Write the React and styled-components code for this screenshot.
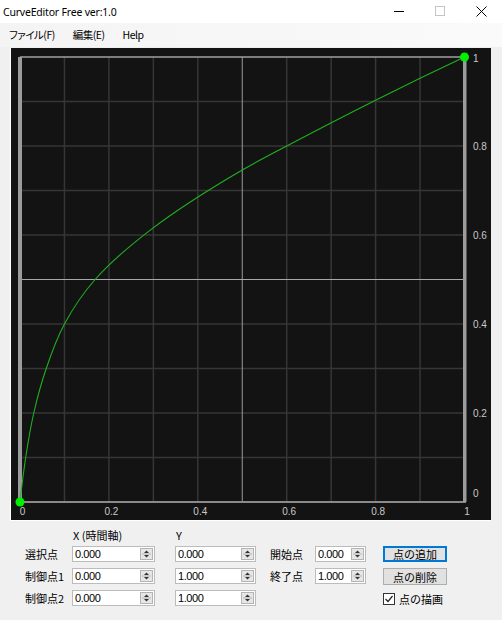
import React from "react";
import styled, { createGlobalStyle } from "styled-components";

const Global = createGlobalStyle`
  html, body { margin: 0; padding: 0; background: #f0f0f0; }
  body { width: 502px; height: 620px; overflow: hidden; }
  * { box-sizing: border-box; }
`;

const Window = styled.div`
  width: 502px;
  height: 620px;
  display: flex;
  flex-direction: column;
  background: #f0f0f0;
  font-family: "Noto Sans CJK JP", "Noto Sans", sans-serif;
  color: #000;
`;

const TitleBar = styled.div`
  height: 23px;
  background: #fff;
  display: flex;
  align-items: center;
  justify-content: space-between;
`;

const Title = styled.span`
  font-family: "Noto Sans", "Noto Sans CJK JP", sans-serif;
  font-size: 10.5px;
  letter-spacing: -0.2px;
  padding-left: 3px;
  color: #000;
`;

const Controls = styled.div`
  display: flex;
  height: 23px;
`;

const CtrlBtn = styled.div`
  width: 41px;
  height: 23px;
  display: flex;
  align-items: center;
  justify-content: center;
`;

const MenuBar = styled.div`
  height: 24px;
  display: flex;
  align-items: center;
  padding-left: 2px;
  background: linear-gradient(to right, #f4f4f4, #fafafa);
`;

const MenuItem = styled.span`
  font-size: 10.5px;
  letter-spacing: -0.5px;
  font-feature-settings: "palt";
  padding: 0 7px;
  margin-right: 4px;
  line-height: 24px;
`;

const CanvasFrame = styled.div`
  margin: 1px 0 0 10px;
  width: 481px;
  height: 473px;
  border-left: 1px solid #fff;
  border-bottom: 1px solid #fff;
  background: #131313;
`;

const Panel = styled.div`
  margin: 7px 0 0 25px;
  display: grid;
  grid-template-columns: 47px 83px 20px 81px 14px 45px 51px 17px 64px;
  grid-template-rows: 12px 16px 16px 16px;
  row-gap: 6px;
  font-size: 11px;
`;

const Header = styled.div`
  grid-column: ${(p) => p.$col};
  grid-row: 1;
  font-size: 11px;
  line-height: 12px;
  padding-left: 1px;
  margin-top: 1px;
`;

const Label = styled.div`
  grid-column: ${(p) => p.$col};
  grid-row: ${(p) => p.$row};
  display: flex;
  align-items: center;
  font-size: 11px;
  white-space: nowrap;
`;

const SpinBox = styled.div`
  grid-column: ${(p) => p.$col};
  grid-row: ${(p) => p.$row};
  display: flex;
  align-items: center;
  justify-content: space-between;
  background: #fff;
  border: 1px solid #bcbcbc;
  height: 16px;
  padding: 0 1px 0 2px;
`;

const SpinValue = styled.span`
  font-family: "Liberation Sans", sans-serif;
  font-size: 11px;
  letter-spacing: -0.4px;
  line-height: 14px;
`;

const Spinner = styled.div`
  width: 13px;
  height: 12px;
  border: 1px solid #b4b4b4;
  background: #e6e6e6;
  display: flex;
  flex-direction: column;
  align-items: center;
  justify-content: center;
`;

const Button = styled.div`
  grid-column: 9;
  grid-row: ${(p) => p.$row};
  height: ${(p) => (p.$tall ? "17px" : "16px")};
  display: flex;
  align-items: center;
  justify-content: center;
  background: #e1e1e1;
  border: ${(p) => (p.$focused ? "1px solid #0078d7" : "1px solid #adadad")};
  box-shadow: ${(p) => (p.$focused ? "inset 0 0 0 1px #0078d7" : "none")};
  font-size: 11px;
`;

const CheckRow = styled.div`
  grid-column: 9 / span 2;
  grid-row: 4;
  display: flex;
  align-items: center;
  gap: 4px;
  padding-top: 2px;
  white-space: nowrap;
`;

const CheckBox = styled.div`
  width: 12px;
  height: 12px;
  border: 1px solid #333;
  background: #fff;
  display: flex;
  align-items: center;
  justify-content: center;
`;

function SpinIcon() {
  return (
    <Spinner>
      <svg width="11" height="10" viewBox="0 0 11 10">
        <path d="M5.5 1.5 L8 4 L3 4 Z" fill="#333" />
        <line x1="1" y1="5" x2="10" y2="5" stroke="#b4b4b4" strokeWidth="1" />
        <path d="M3 6 L8 6 L5.5 8.5 Z" fill="#333" />
      </svg>
    </Spinner>
  );
}

function Spin({ col, row, value }) {
  return (
    <SpinBox $col={col} $row={row}>
      <SpinValue>{value}</SpinValue>
      <SpinIcon />
    </SpinBox>
  );
}

/* chart geometry (local to the 480x472 canvas) */
const X0 = 9;
const X1 = 453.5;
const Y0 = 454;
const Y1 = 9;
const W = X1 - X0;
const H = Y0 - Y1;

/* normalised samples of the curve */
const curveData = [
  [0, 0],
  [0.0128, 0.1],
  [0.031, 0.2],
  [0.059, 0.3],
  [0.1, 0.4],
  [0.169, 0.5],
  [0.293, 0.611],
  [0.5, 0.746],
  [0.6, 0.8],
  [0.8, 0.903],
  [1, 1],
];

/* monotone cubic (PCHIP) through the samples, emitted as bezier segments */
function buildPath(data) {
  const n = data.length;
  const h = [];
  const s = [];
  for (let i = 0; i < n - 1; i++) {
    h.push(data[i + 1][0] - data[i][0]);
    s.push((data[i + 1][1] - data[i][1]) / h[i]);
  }
  const d = new Array(n);
  for (let k = 1; k < n - 1; k++) {
    if (s[k - 1] * s[k] <= 0) d[k] = 0;
    else {
      const w1 = 2 * h[k] + h[k - 1];
      const w2 = h[k] + 2 * h[k - 1];
      d[k] = (w1 + w2) / (w1 / s[k - 1] + w2 / s[k]);
    }
  }
  d[0] = ((2 * h[0] + h[1]) * s[0] - h[0] * s[1]) / (h[0] + h[1]);
  d[n - 1] = ((2 * h[n - 2] + h[n - 3]) * s[n - 2] - h[n - 2] * s[n - 3]) / (h[n - 2] + h[n - 3]);
  const px = (x) => X0 + x * W;
  const py = (y) => Y0 - y * H;
  let path = `M${px(0)} ${py(0)}`;
  for (let i = 0; i < n - 1; i++) {
    const [xa, ya] = data[i];
    const [xb, yb] = data[i + 1];
    const c1x = xa + h[i] / 3;
    const c1y = ya + (d[i] * h[i]) / 3;
    const c2x = xb - h[i] / 3;
    const c2y = yb - (d[i + 1] * h[i]) / 3;
    path += ` C${px(c1x).toFixed(2)} ${py(c1y).toFixed(2)} ${px(c2x).toFixed(2)} ${py(c2y).toFixed(2)} ${px(xb).toFixed(2)} ${py(yb).toFixed(2)}`;
  }
  return path;
}

function Chart() {
  const ticks = Array.from({ length: 11 }, (_, i) => i);
  const xLabels = ["0", "0.2", "0.4", "0.6", "0.8", "1"];
  const yLabels = [
    { t: "1", y: 10 },
    { t: "0.8", y: 98 },
    { t: "0.6", y: 187 },
    { t: "0.4", y: 276 },
    { t: "0.2", y: 365 },
    { t: "0", y: 445 },
  ];
  const lbl = {
    fontFamily: "'Liberation Sans', sans-serif",
    fontSize: 10,
    fill: "#c8c8c8",
  };
  return (
    <svg width="480" height="472" viewBox="0 0 480 472" style={{ display: "block" }}>
      {ticks.map((i) =>
        i === 0 || i === 10 || i === 5 ? null : (
          <line
            key={"v" + i}
            x1={X0 + (W * i) / 10}
            x2={X0 + (W * i) / 10}
            y1={Y1}
            y2={Y0}
            stroke="#363636"
            strokeWidth="1.5"
          />
        )
      )}
      {ticks.map((i) =>
        i === 0 || i === 10 || i === 5 ? null : (
          <line
            key={"h" + i}
            y1={Y1 + (H * i) / 10}
            y2={Y1 + (H * i) / 10}
            x1={X0}
            x2={X1}
            stroke="#363636"
            strokeWidth="1.5"
          />
        )
      )}
      <line x1={X0 + W / 2} x2={X0 + W / 2} y1={Y1} y2={Y0} stroke="#9a9a9a" strokeWidth="1" />
      <line y1={Y1 + H / 2} y2={Y1 + H / 2} x1={X0} x2={X1} stroke="#a8a8a8" strokeWidth="1" />
      <line x1={X0} x2={X1} y1={Y1} y2={Y1} stroke="#a0a0a0" strokeWidth="1.5" />
      <line x1={X0} x2={X1 + 1.5} y1={Y0} y2={Y0} stroke="#8a8a8a" strokeWidth="2" />
      <rect x={X0 - 2} y={Y1} width="4" height={H} fill="#9c9c9c" />
      <rect x={X1 - 1.5} y={Y1} width="3.5" height={H} fill="#9c9c9c" />
      <path d={buildPath(curveData)} fill="none" stroke="#1fb01f" strokeWidth="1.1" />
      <circle cx={X0} cy={Y0} r="4.5" fill="#00f000" />
      <circle cx={X1} cy={Y1} r="4.5" fill="#00f000" />
      {xLabels.map((t, i) => (
        <text key={t} x={X0 + (W * i) / 5 + 2.5} y={467} textAnchor="middle" style={lbl}>
          {t}
        </text>
      ))}
      {yLabels.map(({ t, y }) => (
        <text key={"y" + t} x={462} y={y + 4} style={lbl}>
          {t}
        </text>
      ))}
    </svg>
  );
}

export default function App() {
  return (
    <Window>
      <Global />
      <TitleBar>
        <Title>CurveEditor Free ver:1.0</Title>
        <Controls>
          <CtrlBtn>
            <svg width="11" height="11" viewBox="0 0 11 11">
              <line x1="0" y1="5.5" x2="10" y2="5.5" stroke="#000" strokeWidth="1" />
            </svg>
          </CtrlBtn>
          <CtrlBtn>
            <svg width="11" height="11" viewBox="0 0 11 11">
              <rect x="0.5" y="0.5" width="9" height="9" fill="none" stroke="#c4c4c4" strokeWidth="1" />
            </svg>
          </CtrlBtn>
          <CtrlBtn>
            <svg width="11" height="11" viewBox="0 0 11 11">
              <path d="M0.5 0.5 L10.5 10.5 M10.5 0.5 L0.5 10.5" stroke="#000" strokeWidth="1" />
            </svg>
          </CtrlBtn>
        </Controls>
      </TitleBar>
      <MenuBar>
        <MenuItem>ファイル(F)</MenuItem>
        <MenuItem>編集(E)</MenuItem>
        <MenuItem>Help</MenuItem>
      </MenuBar>
      <CanvasFrame>
        <Chart />
      </CanvasFrame>
      <Panel>
        <Header $col={2}>X (時間軸)</Header>
        <Header $col={4}>Y</Header>

        <Label $col={1} $row={2}>選択点</Label>
        <Spin col={2} row={2} value="0.000" />
        <Spin col={4} row={2} value="0.000" />
        <Label $col={6} $row={2}>開始点</Label>
        <Spin col={7} row={2} value="0.000" />
        <Button $row={2} $focused>点の追加</Button>

        <Label $col={1} $row={3}>制御点1</Label>
        <Spin col={2} row={3} value="0.000" />
        <Spin col={4} row={3} value="1.000" />
        <Label $col={6} $row={3}>終了点</Label>
        <Spin col={7} row={3} value="1.000" />
        <Button $row={3} $tall>点の削除</Button>

        <Label $col={1} $row={4}>制御点2</Label>
        <Spin col={2} row={4} value="0.000" />
        <Spin col={4} row={4} value="1.000" />
        <CheckRow>
          <CheckBox>
            <svg width="10" height="10" viewBox="0 0 10 10">
              <path d="M1.5 5 L4 7.5 L8.5 2" fill="none" stroke="#222" strokeWidth="1.2" />
            </svg>
          </CheckBox>
          <span>点の描画</span>
        </CheckRow>
      </Panel>
    </Window>
  );
}
